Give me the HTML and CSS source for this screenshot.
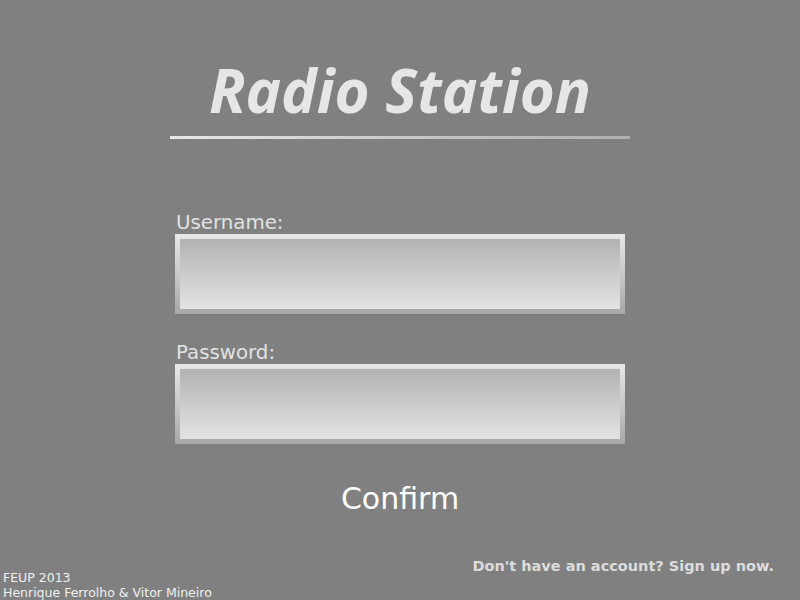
FILE: index.html
```html
<!DOCTYPE html>
<html>
<head>
<meta charset="utf-8">
<link rel="stylesheet" href="styles.css">
</head>
<body>
<div class="page">
  <header class="header">
    <h1 class="title">Radio Station</h1>
    <div class="rule"></div>
  </header>
  <form class="form">
    <label class="label">Username:</label>
    <div class="field"><div class="field-inner"></div></div>
    <label class="label label-pw">Password:</label>
    <div class="field"><div class="field-inner"></div></div>
    <div class="confirm">Confirm</div>
  </form>
  <footer class="footer">
    <div class="credits">FEUP 2013<br>Henrique Ferrolho &amp; Vitor Mineiro</div>
    <div class="signup">Don't have an account? Sign up now.</div>
  </footer>
</div>
</body>
</html>
```
FILE: styles.css
```css
html, body {
  margin: 0;
  padding: 0;
  background: #808080;
  font-family: "DejaVu Sans", sans-serif;
}
.page {
  width: 800px;
  height: 600px;
  display: flex;
  flex-direction: column;
  align-items: center;
  position: relative;
}
.header {
  display: flex;
  flex-direction: column;
  align-items: center;
  padding-top: 57px;
}
.title {
  margin: 0;
  font-family: "Open Sans", sans-serif;
  font-style: italic;
  font-weight: bold;
  font-size: 60px;
  line-height: 67px;
  color: #e6e6e6;
}
.rule {
  margin-top: 12px;
  width: 460px;
  height: 3px;
  background: linear-gradient(to right, #e8e8e8, #c8c8c8 50%, #b0b0b0);
}
.form {
  margin-top: 73px;
  width: 450px;
  display: flex;
  flex-direction: column;
}
.label {
  color: #e2e2e2;
  font-size: 19.8px;
  line-height: 22px;
  padding-left: 1px;
  height: 22px;
}
.label-pw {
  margin-top: 28px;
}
.field {
  height: 80px;
  padding: 5px;
  box-sizing: border-box;
  background: linear-gradient(to bottom, #e8e8e8, #a8a8a8);
}
.field-inner {
  height: 100%;
  background: linear-gradient(to bottom, #b3b3b3, #e3e3e3);
}
.confirm {
  margin-top: 37px;
  text-align: center;
  color: #ffffff;
  font-size: 30px;
  line-height: 36px;
}
.footer {
  margin-top: auto;
  width: 800px;
  display: flex;
  justify-content: space-between;
  align-items: flex-end;
}
.credits {
  color: #f0f0f0;
  font-size: 12.5px;
  line-height: 15px;
  padding-left: 3px;
}
.signup {
  color: #dcdcdc;
  font-size: 14.5px;
  font-weight: bold;
  padding-right: 26px;
  padding-bottom: 26px;
}
```
